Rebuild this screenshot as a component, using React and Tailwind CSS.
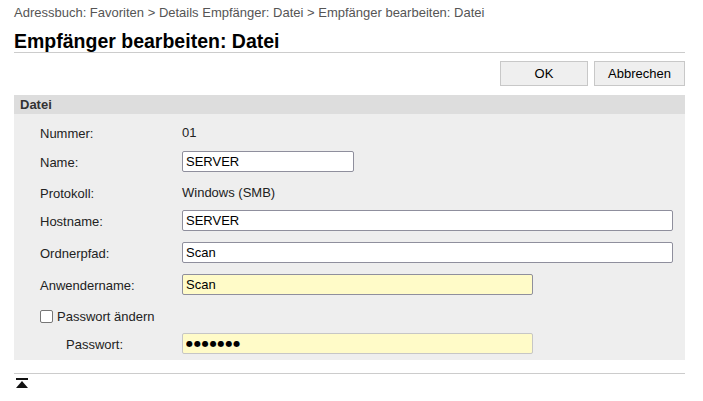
import React from 'react';

const font = { fontFamily: '"Liberation Sans", Arial, sans-serif' };

function Row({ label, indent, mt, children }) {
    return (
        <div className={`flex h-[21px] items-center ${mt}`}>
            <div className={`w-[142px] shrink-0 pt-[2px] text-[13px] text-[#222] ${indent ? 'pl-[26px]' : ''}`}>{label}</div>
            {children}
        </div>
    );
}

function Feld({ value, width, gelb, hell, punkte }) {
    return (
        <input
            type="text"
            readOnly
            value={value}
            className={`h-[21px] ${width} rounded-[2px] border px-[3px] text-black outline-none ${
                punkte ? 'text-[8px] tracking-[0.9px]' : 'text-[13px]'
            } ${gelb ? 'bg-[#fffbc8]' : 'bg-white'} ${hell ? 'border-[#c6c6c6]' : 'border-[#8f8f9d]'}`}
            style={punkte ? { fontFamily: '"DejaVu Sans", sans-serif' } : font}
        />
    );
}

export default function App() {
    return (
        <div className="w-[703px] h-[401px] bg-white pl-[14px] pr-[18px] text-black" style={font}>
            <div className="pt-[5px] text-[13px] leading-[16px] text-[#555]">
                Adressbuch: Favoriten &gt; Details Empfänger: Datei &gt; Empfänger bearbeiten: Datei
            </div>
            <h1 className="mt-[9px] text-[19.5px] font-bold leading-[22px]">Empfänger bearbeiten: Datei</h1>
            <div className="border-t border-[#cccccc]" />

            <div className="mt-[8px] flex justify-end gap-[6px]">
                <button className="h-[25px] w-[88px] border border-[#c8c8c8] bg-[#efefef] text-[13px] text-black">OK</button>
                <button className="h-[25px] w-[91px] border border-[#c8c8c8] bg-[#efefef] text-[13px] text-black">Abbrechen</button>
            </div>

            <div className="mt-[9px]">
                <div className="flex h-[19px] items-center bg-[#dddddd] pl-[6px] text-[13px] font-bold text-[#333]">Datei</div>
                <div className="bg-[#eeeeee] pl-[26px] pt-[8px] pb-[6px]">
                    <Row label="Nummer:">
                        <span className="text-[13px] text-[#222]">01</span>
                    </Row>
                    <Row label="Name:" mt="mt-[8px]">
                        <Feld value="SERVER" width="w-[172px]" />
                    </Row>
                    <Row label="Protokoll:" mt="mt-[10px]">
                        <span className="text-[13px] text-[#222]">Windows (SMB)</span>
                    </Row>
                    <Row label="Hostname:" mt="mt-[7px]">
                        <Feld value="SERVER" width="w-[491px]" />
                    </Row>
                    <Row label="Ordnerpfad:" mt="mt-[11px]">
                        <Feld value="Scan" width="w-[491px]" />
                    </Row>
                    <Row label="Anwendername:" mt="mt-[11px]">
                        <Feld value="Scan" width="w-[351px]" gelb />
                    </Row>
                    <div className="mt-[11px] flex h-[21px] items-center gap-[4px] text-[13px] text-[#222]">
                        <span className="h-[13px] w-[13px] rounded-[2px] border border-[#767676] bg-white" />
                        <span className="pt-[1px]">Passwort ändern</span>
                    </div>
                    <Row label="Passwort:" indent mt="mt-[6px]">
                        <Feld value="●●●●●●●" width="w-[351px]" gelb hell punkte />
                    </Row>
                </div>
            </div>

            <div className="mt-[13px] border-t border-[#cccccc]" />
            <div className="mt-[4px] pl-[2px]">
                <svg width="12" height="11" viewBox="0 0 12 11">
                    <rect x="0" y="0" width="12" height="2" fill="#111" />
                    <polygon points="6,3 12,10 0,10" fill="#111" />
                </svg>
            </div>
        </div>
    );
}
